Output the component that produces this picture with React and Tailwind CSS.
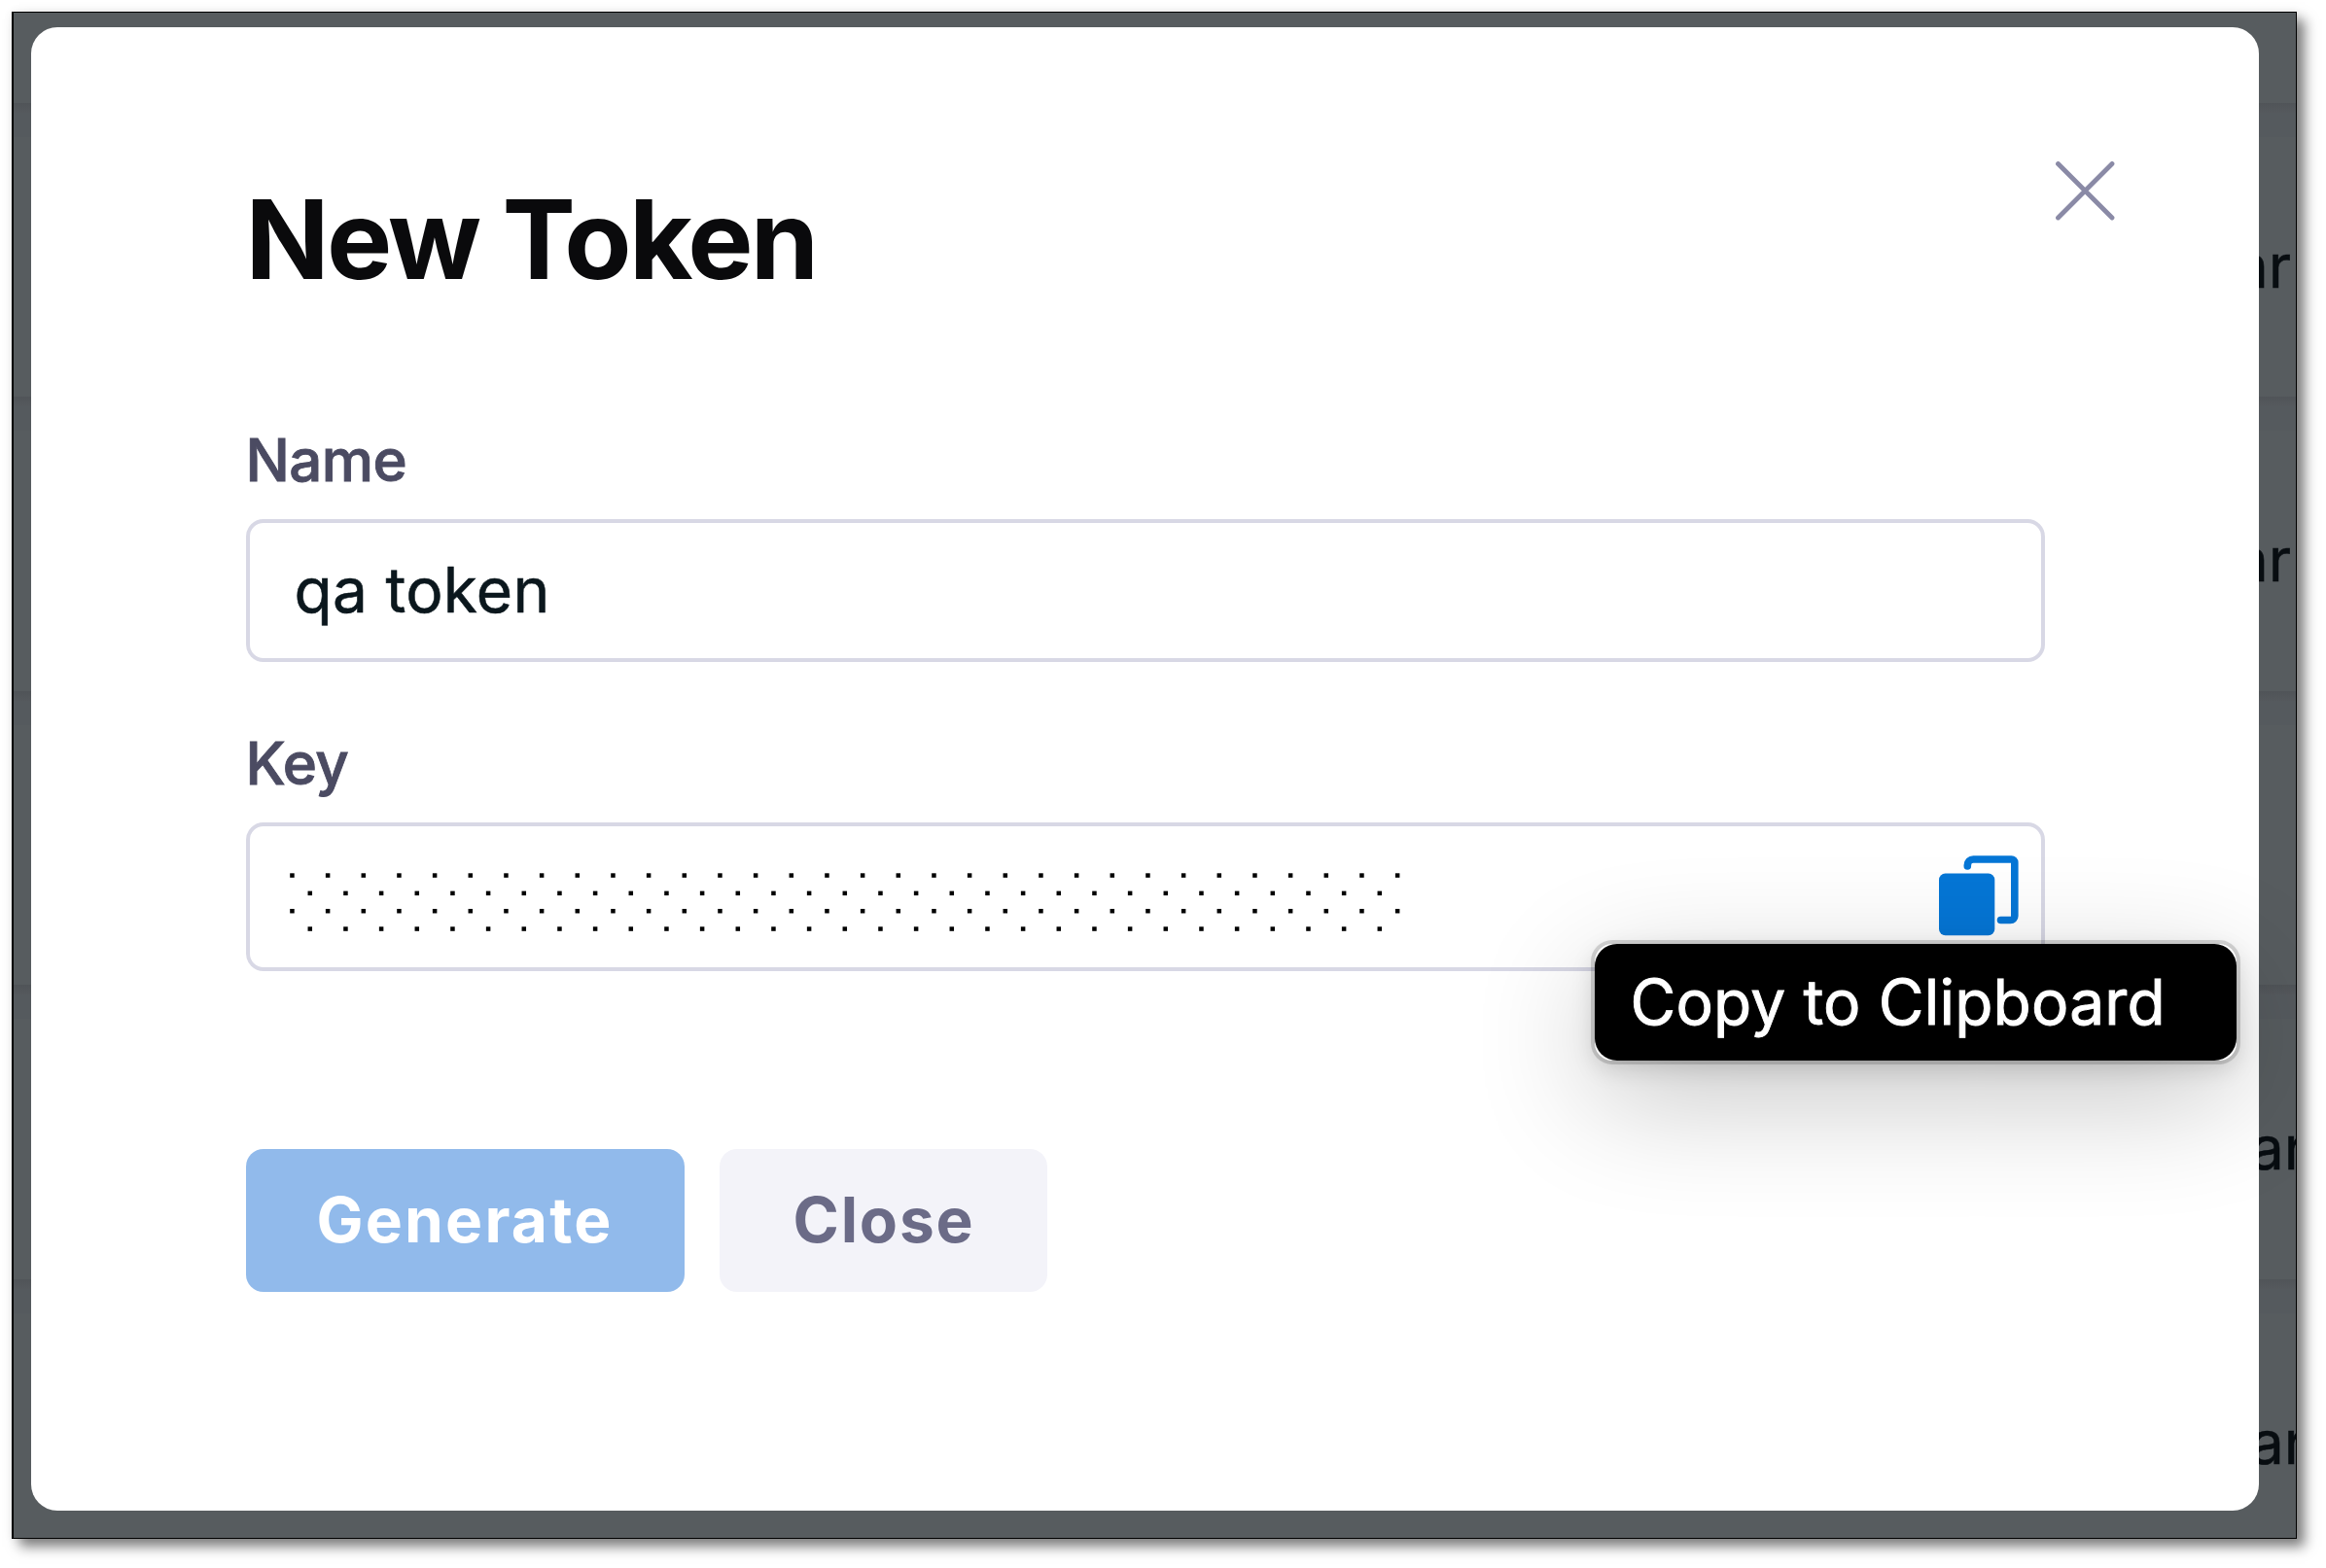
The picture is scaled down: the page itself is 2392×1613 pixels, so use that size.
const ROWS = [
  { height: "h-[93px]", text: "", shift: "" },
  { height: "h-[302px]", text: "ar", shift: "left-[2284px]" },
  { height: "h-[303px]", text: "ar", shift: "left-[2284px]" },
  { height: "h-[302px]", text: "", shift: "" },
  { height: "h-[303px]", text: "ar", shift: "left-[2300px]" },
  { height: "h-[302px]", text: "ar", shift: "left-[2300px]" },
];

function BackgroundTable() {
  return (
    <div className="col-start-1 row-start-1 flex h-[1570px] flex-col overflow-hidden">
      {ROWS.map((row, i) => (
        <div key={i} className={`relative shrink-0 ${row.height}`}>
          {i > 0 && <div className="h-[10px] bg-gradient-to-b from-[#505458] to-[#55595d]" />}
          {i > 0 && <div className="h-[25px] bg-[#555a5e]" />}
          {row.text && (
            <span
              className={`absolute top-[132px] text-[62px] leading-[72px] text-[#080d11] [-webkit-text-stroke:0.5px_#080d11] ${row.shift}`}
            >
              {row.text}
            </span>
          )}
        </div>
      ))}
    </div>
  );
}

function KeyDots() {
  const step = 36.667;
  const dots = [];
  for (let r = 0; r < 4; r++) {
    const count = r % 2 ? 31 : 32;
    for (let c = 0; c < count; c++) {
      dots.push(
        <rect
          key={`${r}-${c}`}
          x={0.2 + c * step + (r % 2 ? step / 2 : 0)}
          y={0.3 + r * (step / 2)}
          width="4.5"
          height="4.5"
        />
      );
    }
  }
  return (
    <svg width="1150" height="62" viewBox="0 0 1150 62" fill="#000">
      {dots}
    </svg>
  );
}

function CopyIcon() {
  return (
    <svg width="82" height="83" viewBox="0 0 82 83" fill="none">
      <rect x="0" y="18.5" width="57.3" height="63.7" rx="6.5" fill="#0576d6" />
      <path
        d="M29.3 11V10a6 6 0 0 1 6-6H74.5a3.3 3.3 0 0 1 3.3 3.3V62.2a4.3 4.3 0 0 1-4.3 4.3H63.5"
        stroke="#0576d6"
        strokeWidth="7.6"
        strokeLinecap="round"
      />
    </svg>
  );
}

function Tooltip() {
  return (
    <div className="absolute left-[1383px] top-[121px] h-[120px] w-[660px] rounded-[18px] bg-white shadow-[0_0_0_4px_rgba(0,0,0,0.15),0_8px_24px_rgba(0,0,0,0.15),0_36px_124px_rgba(0,0,0,0.24)]">
      <div className="flex h-full w-full items-center rounded-[23px] bg-black pb-[1px] pl-[37px]">
        <span className="whitespace-nowrap text-[64px] leading-none tracking-[0.2px] text-white [-webkit-text-stroke:0.9px_white]">
          Copy to Clipboard
        </span>
      </div>
    </div>
  );
}

function Dialog() {
  return (
    <div className="relative col-start-1 row-start-1 ml-[18px] mt-[15px] h-[1526px] w-[2291px] rounded-[27px] bg-white pl-[220.5px] pt-[158px]">
      <button className="absolute left-[2082px] top-[138px]" aria-label="Dismiss">
        <svg width="61" height="61" viewBox="0 0 61 61" stroke="#8a8aa6" strokeWidth="4.8" strokeLinecap="round">
          <path d="M2.5 2.5 58 58M58 2.5 2.5 58" />
        </svg>
      </button>
      <h1 className="whitespace-nowrap text-[113px] font-bold leading-[120px] tracking-[-2.7px] text-[#0a0a0c]">
        New Token
      </h1>
      <div className="mt-[131px] text-[60px] font-medium leading-[72px] tracking-[-0.6px] text-[#4b4b62] [-webkit-text-stroke:0.9px_#4b4b62]">
        Name
      </div>
      <div className="mt-[25px] flex h-[147px] w-[1850px] items-center rounded-[18px] border-4 border-[#d8d8e5] pb-[2px] pl-[46px]">
        <span className="text-[64px] leading-none tracking-[0.3px] text-[#0b171d] [-webkit-text-stroke:0.6px_#0b171d]">
          qa token
        </span>
      </div>
      <div className="mt-[68px] text-[60px] font-medium leading-[72px] tracking-[-0.6px] text-[#4b4b62] [-webkit-text-stroke:0.9px_#4b4b62]">
        Key
      </div>
      <div className="relative mt-[25px] flex h-[153px] w-[1850px] items-start justify-between rounded-[18px] border-4 border-[#d8d8e5] pl-[41px] pr-[23px]">
        <div className="pt-[48px]">
          <KeyDots />
        </div>
        <div className="pt-[30px]">
          <CopyIcon />
        </div>
        <Tooltip />
      </div>
      <div className="mt-[183px] flex gap-[36px]">
        <button className="h-[147px] w-[451px] rounded-[18px] bg-[#91baeb] pb-[1px] text-[64px] font-bold leading-none tracking-[2.2px] text-white">
          Generate
        </button>
        <button className="h-[147px] w-[337px] rounded-[18px] bg-[#f3f3f9] pb-[1px] pl-[2px] text-[64px] font-bold leading-none tracking-[1.8px] text-[#6b6b87]">
          Close
        </button>
      </div>
    </div>
  );
}

export default function App() {
  return (
    <div className="h-[1613px] w-[2392px] overflow-hidden bg-white pl-[12px] pt-[12px] font-['Inter',sans-serif]">
      <div className="h-[1571px] w-[2350px] border border-l-2 border-black bg-[#575c5f] shadow-[8px_8px_12px_rgba(0,0,0,0.5),0_0_10px_rgba(0,0,0,0.06)]">
        <div className="grid h-full w-full grid-cols-1 items-start overflow-hidden">
          <BackgroundTable />
          <Dialog />
        </div>
      </div>
    </div>
  );
}
